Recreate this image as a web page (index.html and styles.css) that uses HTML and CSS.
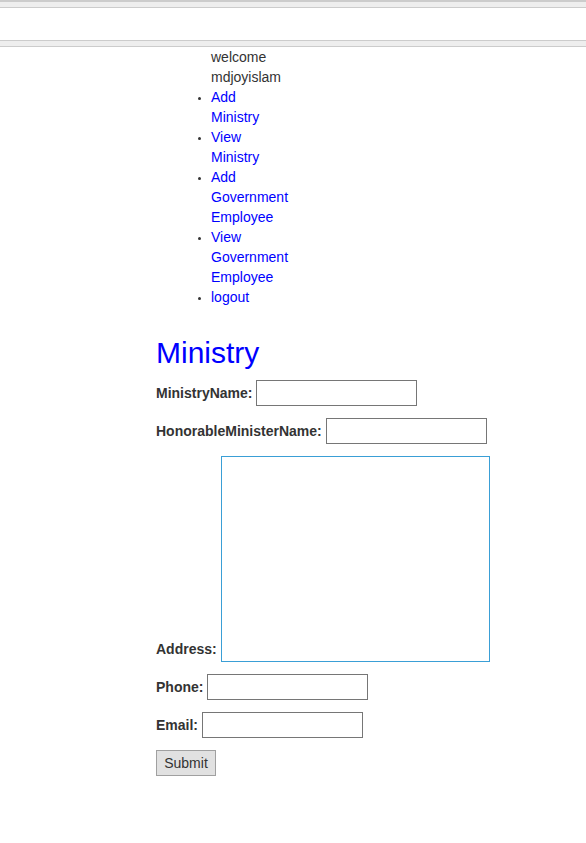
FILE: index.html
```html
<!DOCTYPE html>
<html>
<head>
<meta charset="utf-8">
<title>Ministry</title>
<link rel="stylesheet" href="styles.css">
</head>
<body>
<header class="topbar">
  <div class="band band-top"></div>
  <div class="bar"></div>
  <div class="band band-bottom"></div>
</header>
<main class="page">
  <ul class="nav">
    <li class="welcome">welcome mdjoyislam</li>
    <li><a href="#">Add Ministry</a></li>
    <li><a href="#">View Ministry</a></li>
    <li><a href="#">Add Government Employee</a></li>
    <li><a href="#">View Government Employee</a></li>
    <li><a href="#">logout</a></li>
  </ul>
  <h1 class="title">Ministry</h1>
  <form class="form">
    <div class="row"><label>MinistryName:</label><input type="text" class="field"></div>
    <div class="row"><label>HonorableMinisterName:</label><input type="text" class="field"></div>
    <div class="row row-area"><label>Address:</label><textarea class="area"></textarea></div>
    <div class="row"><label>Phone:</label><input type="text" class="field"></div>
    <div class="row"><label>Email:</label><input type="text" class="field"></div>
    <div class="row"><button type="button" class="submit">Submit</button></div>
  </form>
</main>
</body>
</html>
```

FILE: styles.css
```css
html, body {
  margin: 0;
  padding: 0;
  background: #fff;
}
body {
  font-family: "Liberation Sans", Arial, sans-serif;
  font-size: 14px;
  color: #333;
}
.band {
  height: 5px;
  background: #eeeeee;
  border-top: 1px solid #cccccc;
  border-bottom: 1px solid #cccccc;
}
.band-top {
  border-top-width: 2px;
}
.bar {
  height: 32px;
  background: #fff;
}
.page {
  margin-left: 156px;
}
.nav {
  margin: 0;
  padding: 0 0 0 55px;
  width: 60px;
  line-height: 20px;
  list-style: disc outside;
}
.nav li::marker {
  font-size: 10px;
}
.nav .welcome {
  list-style: none;
}
.nav a {
  color: #0000ff;
  text-decoration: none;
}
.title {
  margin: 29px 0 10px;
  font-size: 30px;
  line-height: 34px;
  font-weight: normal;
  color: #0000ff;
}
.row {
  display: flex;
  align-items: baseline;
  gap: 4px;
  margin-bottom: 12px;
}
.row label {
  font-weight: bold;
  line-height: 16px;
}
.row-area {
  align-items: flex-end;
}
.row-area label {
  margin-bottom: 5px;
}
.field {
  box-sizing: border-box;
  width: 161px;
  height: 26px;
  margin: 0;
  padding: 2px 4px;
  border: 1px solid #767676;
  font-family: "Liberation Sans", Arial, sans-serif;
  font-size: 14px;
}
.area {
  box-sizing: border-box;
  width: 269px;
  height: 206px;
  margin: 0;
  padding: 2px;
  border: 1px solid #3a9fd6;
  resize: none;
  font-family: "Liberation Sans", Arial, sans-serif;
  font-size: 14px;
}
.submit {
  box-sizing: border-box;
  width: 60px;
  height: 26px;
  margin: 0;
  padding: 0;
  background: #e1e1e1;
  border: 1px solid #a0a0a0;
  border-radius: 0;
  color: #333;
  font-family: "Liberation Sans", Arial, sans-serif;
  font-size: 14px;
}
```
